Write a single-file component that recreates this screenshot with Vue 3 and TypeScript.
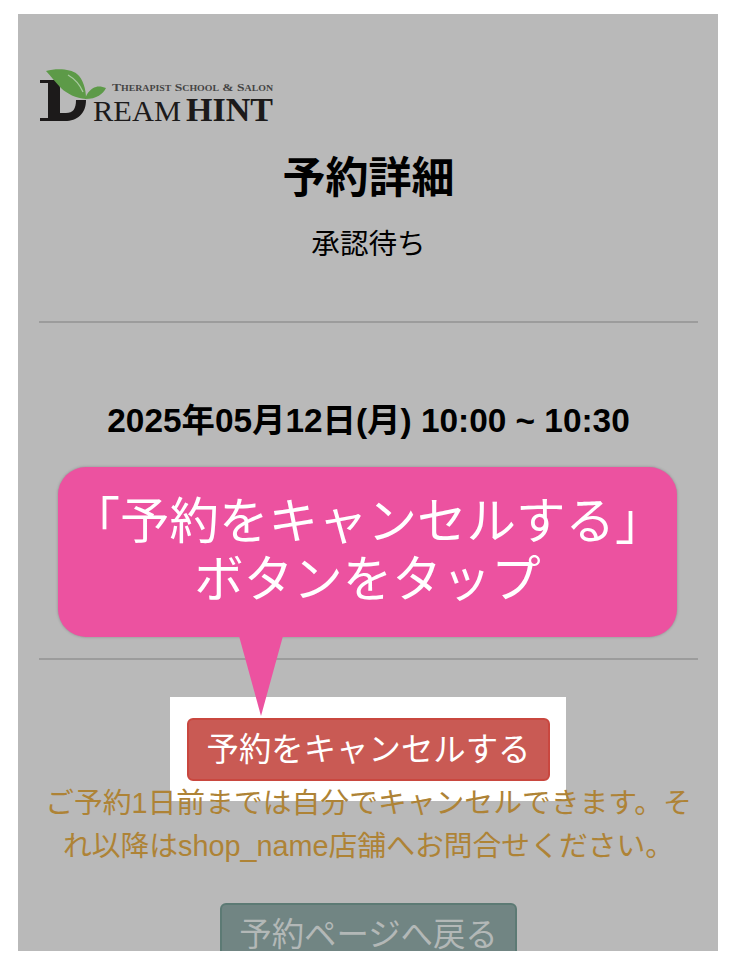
<script setup lang="ts">
const date: string = '2025年05月12日(月) 10:00 ~ 10:30'
</script>

<template>
  <div class="page">
    <main class="panel">
      <svg class="logo" width="236" height="62" viewBox="0 0 236 62" role="img" aria-label="DreamHint">
        <path d="M1 12 H20 L21 20 V45 H27 C34 45 37 41 37 32 H47 C47 46 38 53 26 53 H1 V50 H9 V15 H1 Z" fill="#1c1a1a" />
        <path d="M7 3 C18 0 32 1 38 6 C44 11 47 21 47 31 C37 30 28 26 22 20 C16 14 12 8 7 3 Z" fill="#5d9a48" />
        <path d="M29 7 C36 11 41 17 44 24" fill="none" stroke="#a9c9a0" stroke-width="1.3" />
        <path d="M46 31 C48 25 52 20 57 19 C60 18 64 19 67 20 C64 26 58 31 46 31 Z" fill="#5d9a48" />
        <text class="tag" x="73" y="23" textLength="161" lengthAdjust="spacingAndGlyphs">Therapist School &amp; Salon</text>
        <text class="ream" x="54" y="53" textLength="88" lengthAdjust="spacingAndGlyphs">REAM</text>
        <text class="hint" x="147" y="53" textLength="87" lengthAdjust="spacingAndGlyphs">HINT</text>
      </svg>

      <h1 class="title">予約詳細</h1>
      <p class="status">承認待ち</p>
      <hr class="rule first" />
      <p class="date">{{ date }}</p>
      <hr class="rule second" />

      <section class="actions">
        <div class="highlight"></div>
        <button class="btn cancel" type="button">予約をキャンセルする</button>
        <p class="notice">ご予約1日前までは自分でキャンセルできます。それ以降はshop_name店舗へお問合せください。</p>
        <button class="btn back" type="button">予約ページへ戻る</button>
      </section>

      <div class="bubble">
        <p>「予約をキャンセルする」<br />ボタンをタップ</p>
        <svg class="tail" width="46" height="81" viewBox="0 0 46 81">
          <polygon points="0,0 44,0 22,80" fill="#ec52a0" />
        </svg>
      </div>
    </main>
  </div>
</template>

<style scoped>
.page {
  width: 736px;
  height: 966px;
  padding: 14px 18px 15px;
  box-sizing: border-box;
  background: #fff;
  font-family: "Liberation Sans", "Noto Sans CJK JP", sans-serif;
}
.panel {
  position: relative;
  width: 700px;
  height: 937px;
  padding: 54px 20px 0 21px;
  box-sizing: border-box;
  overflow: hidden;
  background: #b9b9b9;
  color: #000;
}
.logo {
  display: block;
}
.tag {
  font: 600 11px "Liberation Serif", serif;
  font-variant: small-caps;
  fill: #444;
}
.ream {
  font: 400 30.4px "Liberation Serif", serif;
  fill: #1c1a1a;
}
.hint {
  font: 700 34px "Liberation Serif", serif;
  fill: #1c1a1a;
}
.title {
  margin: 18px 0 0;
  font-size: 43px;
  line-height: 60px;
  font-weight: 700;
  text-align: center;
}
.status {
  margin: 16px 0 0;
  font-size: 28.6px;
  line-height: 40px;
  text-align: center;
}
.rule {
  height: 2px;
  margin: 0;
  border: 0;
  background: #9c9c9c;
}
.rule.first {
  margin-top: 57px;
}
.rule.second {
  margin-top: 217px;
}
.date {
  margin: 78px 0 0;
  font-size: 33.4px;
  line-height: 40px;
  font-weight: 700;
  text-align: center;
  white-space: nowrap;
}
.actions {
  position: relative;
  display: flex;
  flex-direction: column;
  align-items: center;
}
.highlight {
  position: absolute;
  top: 37px;
  left: 131px;
  width: 396px;
  height: 104px;
  background: #fff;
}
.btn {
  position: relative;
  display: block;
  box-sizing: border-box;
  border-radius: 6px;
  font-family: inherit;
  font-size: 32.4px;
  line-height: 46px;
  padding: 7px 0;
}
.cancel {
  width: 363px;
  height: 63px;
  margin-top: 58px;
  border: 2px solid #c9473f;
  background: #c95a54;
  color: #fff;
}
.notice {
  position: relative;
  width: 659px;
  margin: 1px 0 0;
  font-size: 28.8px;
  line-height: 43px;
  text-align: center;
  color: #ae8336;
}
.back {
  width: 297px;
  height: 63px;
  margin-top: 35px;
  border: 2px solid #5c7a74;
  background: #718583;
  color: #b3b8b7;
}
.bubble {
  position: absolute;
  top: 453px;
  left: 40px;
  width: 619px;
  height: 170px;
  box-sizing: border-box;
  padding-top: 26px;
  border-radius: 28px;
  background: #ec52a0;
  box-shadow: 0 0 3px rgba(0, 0, 0, 0.25);
  color: #fff;
  text-align: center;
}
.bubble p {
  margin: 0;
  font-size: 49.5px;
  line-height: 58px;
}
.tail {
  position: absolute;
  top: 169px;
  left: 181px;
  display: block;
}
</style>
